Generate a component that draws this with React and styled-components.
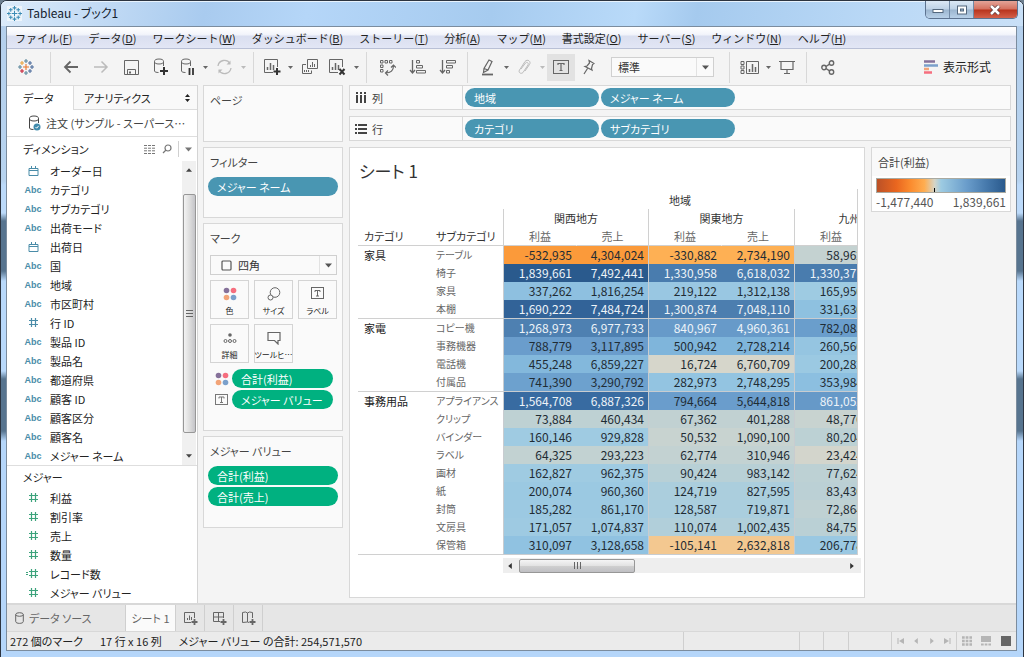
import { useState } from "react"
import styled, { createGlobalStyle } from "styled-components"

const GlobalStyle = createGlobalStyle`
    * {
        box-sizing: border-box;
    }

    body {
        margin: 0;
        background: #6d7f90;
        color: #333;
        font-family: "Noto Sans CJK JP", "Noto Sans", sans-serif;
        font-size: 11px;
        line-height: 18px;
        font-feature-settings: "palt";
    }

    button, select {
        margin: 0;
        padding: 0;
        border: none;
        background: none;
        color: inherit;
        font: inherit;
        font-feature-settings: inherit;
    }

    ul {
        margin: 0;
        padding: 0;
        list-style: none;
    }

    svg {
        display: block;
        flex: none;
    }
`

const Frame = styled.div`
    display: flex;
    flex-direction: column;
    min-height: 100vh;
    padding: 0 6px 6px 5px;
    border: 1px solid #2c3440;
    border-radius: 7px 7px 0 0;
    background: linear-gradient(180deg, #b4cfec 0, #b7d3ef 180px, #bcdafa 184px, #bcdafa 212px, #57748f 220px, #57748f 270px, #b9d9fb 280px, #b9d9fb 370px, #57748f 378px, #57748f 430px, #b5d6fa 440px, #b5d6fa 100%);
`

const TitleBar = styled.header`
    display: flex;
    height: 25px;
    margin: 0 -6px 0 -5px;
    padding-left: 6px;
    border-radius: 6px 6px 0 0;
    background: linear-gradient(100deg, #dcebfa 0%, #c4dcf5 9%, #a9cbef 20%, #b5d6f8 30%, #a6cbef 48%, #b9daf9 62%, #a5caee 68%, #b9d8f6 85%, #c9e0f7 100%);
    box-shadow: inset 0 1px 0 #e8f3fd;
`

const AppName = styled.h1`
    flex: 1;
    margin: 0;
    padding: 3px 0 0 5px;
    color: #15222e;
    font-size: 12px;
    font-weight: 400;
    line-height: 18px;
`

const AppIcon = styled.span`
    width: 15px;
    height: 15px;
    margin-top: 5px;
    background: #eef5fb;
`

const WindowButtons = styled.div`
    display: flex;
    height: 18px;
    margin-right: 5px;
    border: 1px solid #5d7390;
    border-top: none;
    border-radius: 0 0 5px 5px;
    overflow: hidden;
`

const WindowButton = styled.button`
    display: flex;
    align-items: center;
    justify-content: center;
    width: ${(props) => props.$close ? "43px" : "24px"};
    border-right: 1px solid ${(props) => props.$close ? "transparent" : "#7189a5"};
    background: ${(props) => props.$close
        ? "linear-gradient(#e3a498 0%, #d4705e 48%, #b8331c 52%, #d4604a 100%)"
        : "linear-gradient(#dbe8f5 0%, #bdd1e6 48%, #9bb5cf 52%, #b8d0e8 100%)"};
`

const Shell = styled.div`
    display: flex;
    flex: 1;
    flex-direction: column;
    border: 1px solid #7b8c9e;
    background: #f4f4f4;
`

const MenuBar = styled.nav`
    display: flex;
    gap: 16px;
    height: 22px;
    padding: 0 8px;
    border-bottom: 1px solid #b9c0d6;
    background: linear-gradient(#fff 0%, #f3f5fb 35%, #dadff0 45%, #e2e6f5 100%);
    font-feature-settings: normal;
`

const MenuItem = styled.button`
    color: #222;
    line-height: 20px;
    white-space: nowrap;
`

const Toolbar = styled.div`
    display: flex;
    align-items: center;
    height: 36px;
    color: #666;
`

const Divider = styled.span`
    width: 1px;
    height: 31px;
    margin: 0 5px;
    background: #d8d8d8;
`

const ToolButton = styled.button`
    display: flex;
    align-items: center;
    justify-content: center;
    width: ${(props) => props.$width || 28}px;
    height: 27px;
    background: ${(props) => props.$active ? "#e2e2e2" : "none"};
    color: ${(props) => props.$faded ? "#bbb" : "#666"};
`

const ShowMe = styled.button`
    display: flex;
    align-items: center;
    gap: 5px;
    margin-left: auto;
    margin-right: 25px;
    color: #222;
    font-size: 12px;
`

const SelectBox = styled.label`
    display: flex;
    align-items: center;
    flex: ${(props) => props.$wide ? "1" : "none"};
    width: ${(props) => props.$wide ? "auto" : "103px"};
    height: 20px;
    margin: ${(props) => props.$wide ? "0" : "0 10px"};
    padding-left: ${(props) => props.$wide ? "10px" : "6px"};
    border: 1px solid #d0d0d0;
    background: #fafafa;
    color: #555;

    select {
        flex: 1;
        min-width: 0;
        padding-left: ${(props) => props.$wide ? "6px" : "0"};
        appearance: none;
        color: #333;
        line-height: 18px;
    }
`

const SelectArrow = styled.span`
    display: flex;
    align-items: center;
    justify-content: center;
    width: 17px;
    height: 18px;
    border-left: 1px solid #e2e2e2;
`

const Workspace = styled.main`
    display: flex;
    flex: 1;
`

const DataPane = styled.aside`
    display: flex;
    flex-direction: column;
    width: 191px;
    flex: none;
    border-right: 1px solid #d4d4d4;
    background: #fff;
    color: #222;
`

const PaneTabs = styled.div`
    display: flex;
    height: 25px;
`

const PaneTab = styled.button`
    display: flex;
    align-items: center;
    justify-content: space-between;
    width: ${(props) => props.$grow ? "auto" : "66px"};
    flex: ${(props) => props.$grow ? "1" : "none"};
    padding: 0 7px 0 ${(props) => props.$grow ? "10px" : "16px"};
    border: solid #dcdcdc;
    border-width: ${(props) => props.$active ? "1px 0 0 0" : "1px 0 1px 1px"};
    background: ${(props) => props.$active ? "#fff" : "#f9f9f9"};
`

const SourceRow = styled.button`
    display: flex;
    align-items: center;
    gap: 5px;
    height: 27px;
    padding: 0 2px 0 20px;
    border-bottom: 1px solid #dedede;
    color: #444;
    text-align: left;
    white-space: nowrap;
`

const PaneHeader = styled.div`
    display: flex;
    align-items: center;
    gap: 6px;
    height: ${(props) => props.$short ? "22px" : "24px"};
    padding: 0 5px 0 16px;
    color: #777;
`

const PaneTitle = styled.h2`
    flex: 1;
    margin: 0;
    color: #222;
    font-size: 11px;
    font-weight: 400;
`

const HeaderLine = styled.span`
    width: 1px;
    height: 16px;
    background: #d0d0d0;
`

const DimensionArea = styled.div`
    display: flex;
    border-bottom: 1px solid #dedede;
`

const FieldList = styled.ul`
    flex: 1;
    color: ${(props) => props.$measure ? "#3da37c" : "#4a8ca8"};
`

const FieldRow = styled.li`
    display: flex;
    align-items: center;
    height: 19px;
    padding-left: 16px;
`

const FieldIcon = styled.span`
    display: flex;
    align-items: center;
    justify-content: center;
    width: 20px;
    margin-right: 7px;
    font-family: "Liberation Sans", Arial, sans-serif;
    font-size: 9px;
    font-weight: 700;
`

const FieldName = styled.span`
    color: #222;
    white-space: nowrap;
`

const VScroll = styled.div`
    display: flex;
    flex-direction: column;
    align-items: center;
    width: 14px;
    margin-right: 1px;
    padding: 6px 0;
    background: #f0f0f0;
    color: #444;
`

const VThumb = styled.div`
    display: flex;
    flex-direction: column;
    align-items: center;
    justify-content: center;
    gap: 2px;
    width: 13px;
    height: 239px;
    margin: 21px 0 auto;
    border: 1px solid #979797;
    border-radius: 2px;
    background: linear-gradient(90deg, #f3f3f3 0%, #dedede 50%, #c4c4c8 100%);
`

const Grip = styled.i`
    width: ${(props) => props.$upright ? "1px" : "7px"};
    height: ${(props) => props.$upright ? "7px" : "1px"};
    background: #666;
`

const CardColumn = styled.section`
    display: flex;
    flex-direction: column;
    gap: 5px;
    width: 140px;
    flex: none;
    margin-left: 5px;
`

const Card = styled.div`
    min-height: ${(props) => props.$height}px;
    padding: 0 5px;
    border: 1px solid #d8d8d8;
    background: #fafafa;
`

const CardTitle = styled.h2`
    margin: 0;
    padding-left: 1px;
    color: #444;
    font-size: 11px;
    font-weight: 400;
    line-height: 29px;
`

const Pill = styled.button`
    display: block;
    width: ${(props) => props.$width || "100%"};
    height: 19px;
    padding-left: 9px;
    border-radius: 10px;
    background: ${(props) => props.$green ? "#00b180" : "#4996b2"};
    color: #fff;
    line-height: 18px;
    text-align: left;
`

const PillStack = styled.div`
    display: grid;
    gap: 2px;
    margin: 0 -1px;
`

const MarkBody = styled.div`
    display: grid;
    gap: 5px;
    padding: 2px 0 0 1px;
`

const MarkGrid = styled.div`
    display: grid;
    grid-template-columns: repeat(3, 39px);
    gap: 5px;
`

const MarkButton = styled.button`
    display: flex;
    flex-direction: column;
    align-items: center;
    justify-content: space-between;
    height: 39px;
    padding-top: 6px;
    border: 1px solid #d4d4d4;
    color: #666;

    span {
        color: #222;
        font-size: 8px;
        line-height: 14px;
        white-space: nowrap;
    }
`

const MarkPills = styled.div`
    display: grid;
    grid-template-columns: 14px 101px;
    gap: 2px 3px;
    align-items: center;
    padding: 1px 0 0 5px;
    color: #777;
`

const Content = styled.section`
    display: flex;
    flex: 1;
    flex-direction: column;
    gap: 6px;
    min-width: 0;
    padding: 0 5px 5px 6px;
`

const Shelf = styled.div`
    display: flex;
    align-items: center;
    gap: 2px;
    height: 25px;
    border: 1px solid #d8d8d8;
    background: #fafafa;
`

const ShelfLabel = styled.div`
    display: flex;
    align-items: center;
    gap: 5px;
    width: 113px;
    height: 23px;
    padding-left: 5px;
    border-right: 1px solid #d8d8d8;
    color: #444;
`

const ViewRow = styled.div`
    display: flex;
    flex: 1;
    align-items: flex-start;
    gap: 6px;
`

const Sheet = styled.article`
    flex: 1;
    align-self: stretch;
    min-width: 0;
    padding: 11px 6px 24px 8px;
    border: 1px solid #d8d8d8;
    background: #fff;
`

const SheetTitle = styled.h2`
    margin: 0 0 6px;
    padding-left: 1px;
    color: #333;
    font-size: 17px;
    font-weight: 400;
    line-height: 24px;
`

const TableClip = styled.div`
    overflow: hidden;
    border-right: 1px solid #d0d0d0;
`

const CrossTab = styled.table`
    width: 568px;
    border-spacing: 0;
    table-layout: fixed;
    color: #333;

    th {
        padding: 0;
        font-weight: 400;
        text-align: left;
        vertical-align: top;
        white-space: nowrap;
    }
`

const Col = styled.col`
    width: ${(props) => props.$width}px;
`

const TopHead = styled.th`
    height: 20px;

    && {
        padding: 2px 69px 0 0;
        text-align: center;
    }
`

const RegionHead = styled.th`
    height: 18px;
    border-left: 1px solid #d0d0d0;

    && {
        text-align: center;
    }
`

const ColumnHead = styled.th`
    height: 19px;
    border-bottom: 1px solid #d0d0d0;
    border-left: 1px solid ${(props) => props.$first ? "#d0d0d0" : "transparent"};
    color: #666;

    && {
        text-align: center;
    }
`

const LabelHead = styled.th`
    height: 19px;
    border-bottom: 1px solid #d0d0d0;

    && {
        padding-left: 6px;
    }
`

const RowLabel = styled.th`
    height: ${(props) => props.$last ? "19px" : "18px"};
    border-bottom: ${(props) => props.$last ? "1px solid #d0d0d0" : "none"};
    color: ${(props) => props.$group ? "#222" : "#666"};
    font-size: ${(props) => props.$group ? "11px" : "10px"};

    && {
        padding-left: 6px;
    }
`

const Value = styled.td`
    height: ${(props) => props.$last ? "19px" : "18px"};
    padding: 0 4px 0 0;
    border-bottom: ${(props) => props.$last ? "1px solid #c8ccd0" : "none"};
    border-left: ${(props) => props.$first ? "1px solid #c8ccd0" : "none"};
    background: ${(props) => props.$color};
    color: ${(props) => props.$light ? "#edf3f8" : "#1f2c34"};
    font-size: 12px;
    font-feature-settings: normal;
    text-align: right;
`

const HScroll = styled.div`
    display: flex;
    align-items: center;
    justify-content: space-between;
    height: 15px;
    margin: 3px -3px 0 145px;
    padding: 0 6px 0 4px;
    background: #eee;
    color: #333;
`

const HThumb = styled.div`
    display: flex;
    align-items: center;
    justify-content: center;
    gap: 2px;
    width: 116px;
    height: 14px;
    margin: 0 auto 0 6px;
    border: 1px solid #979797;
    border-radius: 2px;
    background: linear-gradient(#f5f5f5 0%, #e2e2e2 48%, #cfcfcf 52%, #bfbfc3 100%);
`

const Legend = styled.aside`
    width: 140px;
    flex: none;
    border: 1px solid #d8d8d8;
    background: #fff;
`

const LegendTitle = styled.h2`
    margin: 0;
    padding-left: 6px;
    background: #f9f9f9;
    color: #444;
    font-size: 11px;
    font-weight: 400;
    line-height: 28px;
`

const LegendBody = styled.div`
    display: grid;
    grid-template-columns: 1fr auto;
    padding: 2px 4px 0;
    color: #555;
    font-size: 12px;
    font-feature-settings: normal;
`

const Ramp = styled.div`
    display: flex;
    grid-column: 1 / 3;
    align-items: flex-end;
    height: 15px;
    padding-left: 57px;
    border: 1px solid #a9a9a0;
    background: linear-gradient(90deg, #bb5127 0%, #e9661f 15%, #fb8b2e 26%, #ffad50 37%, #d5d4c6 45%, #9dcbe2 50%, #6a9dcb 70%, #4578ab 86%, #2a5a8d 100%);
`

const ZeroTick = styled.i`
    width: 1px;
    height: 4px;
    background: #000;
`

const SheetTabs = styled.nav`
    display: flex;
    height: 28px;
    border-top: 2px solid #d8d8d8;
    background: #e6e6e6;
    color: #666;
`

const SheetTab = styled.button`
    display: flex;
    align-items: center;
    justify-content: ${(props) => props.$source ? "flex-start" : "center"};
    gap: 5px;
    width: ${(props) => props.$width}px;
    padding-left: ${(props) => props.$source ? "8px" : "0"};
    border-right: 1px solid #cfcfcf;
    background: ${(props) => props.$active ? "#fafafa" : "none"};
`

const StatusBar = styled.footer`
    display: flex;
    height: 19px;
    border-top: 1px solid #d8d8d8;
    background: #ebebeb;
    color: #222;
`

const StatusText = styled.div`
    display: flex;
    flex: 1;
    gap: 17px;
    padding-left: 3px;
`

const StatusCell = styled.div`
    display: flex;
    align-items: center;
    justify-content: space-around;
    width: ${(props) => props.$width}px;
    border-left: 1px solid #cfcfcf;
    color: #b5b5b5;
`

/* icons */

const Caret = ({ size = 5, dir = "down" }) => {
    const turn = { down: 0, left: 90, up: 180, right: 270 }[dir]
    return (
        <svg width={size} height={size} viewBox="0 0 10 10" fill="currentColor">
            <path d="M0 2h10L5 8z" transform={`rotate(${turn} 5 5)`}/>
        </svg>
    )
}

const Icon = ({ w = 18, h = 18, children, ...rest }) => (
    <svg width={w} height={h} viewBox={`0 0 ${w} ${h}`} fill="none" stroke="currentColor" {...rest}>
        {children}
    </svg>
)

const Logo = ({ size, colors }) => {
    const marks = [
        [8, 8, 3, colors[0]], [8, 2, 2, colors[1]], [8, 14, 2, colors[1]], [2, 8, 2, colors[1]], [14, 8, 2, colors[3]],
        [4, 4, 2, colors[2]], [12, 4, 2, colors[3]], [4, 12, 2, colors[4]], [12, 12, 2, colors[3]],
    ]
    return (
        <svg width={size} height={size} viewBox="0 0 16 16" fill="none">
            {marks.map(([x, y, r, color], index) => (
                <path key={index} d={`M${x - r} ${y}h${r * 2}M${x} ${y - r}v${r * 2}`} stroke={color} strokeWidth="1.1"/>
            ))}
        </svg>
    )
}

const BarsPath = () => <path d="M4.5 12V9M7.5 12V5M10.5 12V7" strokeWidth="1.5"/>

const Cylinder = () => (
    <>
        <ellipse cx="7" cy="3.5" rx="4.5" ry="2.5"/>
        <path d="M2.5 3.5V13c0 1 2 1.500 4 1.500M11.500 3.500V8"/>
    </>
)

const TextIcon = ({ w = 16, h = 14 }) => (
    <Icon w={w} h={h}>
        <rect x="0.5" y="0.5" width={w - 1} height={h - 1}/>
        <path d={`M${w / 2 - 2.5} ${h / 2 - 1}v-1.5h5v1.500M${w / 2} ${h / 2 - 2.5}v5.500M${w / 2 - 1.5} ${h / 2 + 3}h3`}/>
    </Icon>
)

const ColorDots = () => (
    <Icon w={14} h={14} stroke="none">
        <circle cx="3.5" cy="3.5" r="2.8" fill="#86719a"/>
        <circle cx="10.5" cy="3.5" r="2.8" fill="#f66e7e"/>
        <circle cx="3.5" cy="10.5" r="2.8" fill="#f2a478"/>
        <circle cx="10.5" cy="10.5" r="2.8" fill="#7ba0cb"/>
    </Icon>
)

const HashIcon = ({ calc }) => (
    <Icon w={14} h={11} strokeWidth="1.2">
        <path d="M5.5 1v9M9.5 1v9M3 3.5h9M3 7.500h9"/>
        {calc && <path d="M0 4.5h2M0 6.5h2"/>}
    </Icon>
)

const CalendarIcon = () => (
    <Icon w={11} h={10}>
        <path d="M1 2.5h9v7H1zM1 4.5h9M3.5 0v3M7.5 0v3"/>
    </Icon>
)

const fieldIcons = {
    abc: "Abc",
    date: <CalendarIcon/>,
    num: <HashIcon/>,
    calc: <HashIcon calc/>,
}

/* data */

const menus = [
    ["ファイル", "F"], ["データ", "D"], ["ワークシート", "W"], ["ダッシュボード", "B"], ["ストーリー", "T"], ["分析", "A"],
    ["マップ", "M"], ["書式設定", "O"], ["サーバー", "S"], ["ウィンドウ", "N"], ["ヘルプ", "H"],
]

const dimensions = [
    ["date", "オーダー日"], ["abc", "カテゴリ"], ["abc", "サブカテゴリ"], ["abc", "出荷モード"], ["date", "出荷日"], ["abc", "国"],
    ["abc", "地域"], ["abc", "市区町村"], ["num", "行 ID"], ["abc", "製品 ID"], ["abc", "製品名"], ["abc", "都道府県"],
    ["abc", "顧客 ID"], ["abc", "顧客区分"], ["abc", "顧客名"], ["abc", "メジャー ネーム"],
]

const measures = [
    ["num", "利益"], ["num", "割引率"], ["num", "売上"], ["num", "数量"], ["calc", "レコード数"], ["num", "メジャー バリュー"],
]

// profit / sales pairs for each region
const groups = [
    { name: "家具", rows: [
        ["テーブル", -532935, 4304024, -330882, 2734190, 58962],
        ["椅子", 1839661, 7492441, 1330958, 6618032, 1330371],
        ["家具", 337262, 1816254, 219122, 1312138, 165950],
        ["本棚", 1690222, 7484724, 1300874, 7048110, 331630],
    ] },
    { name: "家電", rows: [
        ["コピー機", 1268973, 6977733, 840967, 4960361, 782085],
        ["事務機器", 788779, 3117895, 500942, 2728214, 260560],
        ["電話機", 455248, 6859227, 16724, 6760709, 200282],
        ["付属品", 741390, 3290792, 282973, 2748295, 353984],
    ] },
    { name: "事務用品", rows: [
        ["アプライアンス", 1564708, 6887326, 794664, 5644818, 861052],
        ["クリップ", 73884, 460434, 67362, 401288, 48770],
        ["バインダー", 160146, 929828, 50532, 1090100, 80204],
        ["ラベル", 64325, 293223, 62774, 310946, 23424],
        ["画材", 162827, 962375, 90424, 983142, 77624],
        ["紙", 200074, 960360, 124719, 827595, 83430],
        ["封筒", 185282, 861170, 128587, 719871, 72864],
        ["文房具", 171057, 1074837, 110074, 1002435, 84755],
        ["保管箱", 310097, 3128658, -105141, 2632818, 206778],
    ] },
]

const stops = [
    [-532935, 251, 154, 58], [-330882, 254, 176, 84], [-105141, 243, 200, 144], [16724, 214, 214, 203], [58962, 196, 210, 209],
    [90424, 184, 208, 214], [124719, 171, 206, 221], [160146, 159, 203, 226], [310097, 144, 194, 225], [500942, 127, 181, 219],
    [788779, 106, 157, 204], [1268973, 78, 128, 177], [1564708, 56, 107, 161], [1839661, 42, 90, 141],
]

const profitColor = (value) => {
    const next = Math.max(1, stops.findIndex((stop) => value <= stop[0]))
    const [from, to] = [stops[next - 1], stops[next]]
    const t = (value - from[0]) / (to[0] - from[0])
    return `rgb(${[1, 2, 3].map((i) => Math.round(from[i] + (to[i] - from[i]) * t)).join(",")})`
}

const Fields = ({ items, measure }) => (
    <FieldList $measure={measure}>
        {items.map(([type, name]) => (
            <FieldRow key={name}>
                <FieldIcon>{fieldIcons[type]}</FieldIcon>
                <FieldName>{name}</FieldName>
            </FieldRow>
        ))}
    </FieldList>
)

const MainToolbar = () => {
    const [fit, setFit] = useState("標準")

    return (
        <Toolbar>
            <ToolButton $width={38} aria-label="スタート"><Logo size={16} colors={["#e8762c", "#5b879b", "#e8a33d", "#4a6a9b", "#c72037"]}/></ToolButton>
            <Divider/>
            <ToolButton $width={30} aria-label="元に戻す"><Icon w={16} h={14} strokeWidth="1.8"><path d="M15 7H2M7.5 1.5L2 7l5.5 5.5"/></Icon></ToolButton>
            <ToolButton $width={30} $faded aria-label="やり直し"><Icon w={16} h={14} strokeWidth="1.5"><path d="M1 7h13M8.5 1.5L14 7l-5.500 5.5"/></Icon></ToolButton>
            <ToolButton $width={30} aria-label="保存"><Icon w={15} h={15}><path d="M0.5 0.5h14v14h-14zM3.5 14V9.5h8V14"/><path d="M5 12.5h2" strokeWidth="2"/></Icon></ToolButton>
            <ToolButton $width={30} aria-label="新しいデータ ソース"><Icon><Cylinder/><path d="M12 9v8M8 13h8" stroke="#333" strokeWidth="2"/></Icon></ToolButton>
            <ToolButton $width={24} aria-label="自動更新の一時停止"><Icon><Cylinder/><path d="M10.5 10v7M14 10v7" stroke="#333" strokeWidth="1.8"/></Icon></ToolButton>
            <ToolButton $width={10} aria-label="更新オプション"><Caret/></ToolButton>
            <ToolButton $width={28} $faded aria-label="更新"><Icon w={17} h={16}><path d="M2 7a6.500 6.500 0 0 1 12-2.500M15 9a6.500 6.500 0 0 1-12 2.500" strokeWidth="1.3"/><path d="M14.5 1.5v4h-4zM2.5 14.5v-4h4z" fill="currentColor" stroke="none"/></Icon></ToolButton>
            <ToolButton $width={10} $faded aria-label="更新の種類"><Caret/></ToolButton>
            <Divider/>
            <ToolButton $width={26} aria-label="新しいワークシート"><Icon><path d="M10 14.5H1.5v-13h13V9"/><BarsPath/><path d="M14 10v7M10.5 13.5h7" stroke="#333" strokeWidth="2"/></Icon></ToolButton>
            <ToolButton $width={10} aria-label="新規作成の種類"><Caret/></ToolButton>
            <ToolButton aria-label="複製"><Icon w={17} h={16}><path d="M6.5 0.5h10v9h-10zM5 5.500H1.500v9h9V11.500M9.500 8V6M11.500 8V3M13.500 8V5M3.500 13v-2M5.500 13v-2M7.500 13v-2"/></Icon></ToolButton>
            <ToolButton aria-label="シートのクリア"><Icon><path d="M10 14.5H1.5v-13h13V9"/><BarsPath/><path d="M11.5 11l5 5.5M16.5 11l-5 5.5" stroke="#333" strokeWidth="2"/></Icon></ToolButton>
            <ToolButton $width={10} aria-label="クリアの種類"><Caret/></ToolButton>
            <Divider/>
            <ToolButton $width={30} aria-label="行と列の交換"><Icon w={17} h={17}><path d="M1.500 1.500h2.500v2.500H1.500zM6 1.500h2.500v2.500H6zM10.500 1.500H13v2.500h-2.500zM1.500 6H4v2.500H1.500zM1.500 10.500H4V13H1.500z"/><path d="M14.500 6.500c0 5-2.500 7.500-8 7.500M12 8.500l2.500-2.500L17 8.500M9 11.500L6.500 14 9 16.500" strokeWidth="1.200"/></Icon></ToolButton>
            <ToolButton $width={30} aria-label="昇順"><Icon w={17} h={16}><path d="M3.5 1v12M1 11l2.500 3L6 11" strokeWidth="1.3"/><path d="M7.5 1.500h3v2.500h-3zM7.5 6.500h6V9h-6zM7.5 11.500h9V14h-9z"/></Icon></ToolButton>
            <ToolButton $width={30} aria-label="降順"><Icon w={17} h={16}><path d="M3.5 1v12M1 11l2.500 3L6 11" strokeWidth="1.3"/><path d="M7.5 1.500h9V4h-9zM7.5 6.500h6V9h-6zM7.5 11.500h3V14h-3z"/></Icon></ToolButton>
            <Divider/>
            <ToolButton $width={28} aria-label="ハイライト"><Icon w={15} h={17}><path d="M9 1l3 1.500-4 8.500-4.500 2.500L4 9.500zM4 9.500L8 11" strokeWidth="1.200"/><path d="M2 15.500h11" strokeWidth="1.8"/></Icon></ToolButton>
            <ToolButton $width={10} aria-label="ハイライトの種類"><Caret/></ToolButton>
            <ToolButton $width={26} $faded aria-label="グループ"><Icon w={14} h={16}><path d="M4 10l4.500-6c1.500-1.500 3.500 0 2.500 2L6 13.500c-2 2-5 0-3.500-2.500L8 2.500c2.500-3 6.500 0 4.500 3L8 12"/></Icon></ToolButton>
            <ToolButton $width={10} $faded aria-label="グループの種類"><Caret/></ToolButton>
            <ToolButton $active aria-label="マーク ラベルを表示"><Icon w={16} h={14}><rect x="0.5" y="0.5" width="15" height="13"/><path d="M5 5V3.500h6V5M8 3.500v7M6.500 10.500h3" strokeWidth="1.2"/></Icon></ToolButton>
            <ToolButton $width={26} aria-label="軸の固定"><Icon w={13} h={16}><path d="M7 1.500l5 3-1.500 1-1 4 .500 1.500-7-3.500 2-.500 2.500-3zM5.500 9.500L2 15" strokeWidth="1.200"/></Icon></ToolButton>
            <SelectBox>
                <select aria-label="表示サイズ" value={fit} onChange={(e) => setFit(e.target.value)}>
                    <option>標準</option>
                    <option>幅を合わせる</option>
                    <option>ビュー全体</option>
                </select>
                <SelectArrow><Caret size={7}/></SelectArrow>
            </SelectBox>
            <Divider/>
            <ToolButton $width={28} aria-label="カードの表示"><Icon w={19} h={15}><path d="M1 1.500h3v3H1zM1 6h3v3H1zM1 10.500h3v3H1zM6.500 1.500h12v12h-12z"/><path d="M9.500 12V9M12.500 12V4M15.500 12V7" strokeWidth="1.5"/></Icon></ToolButton>
            <ToolButton $width={10} aria-label="カードの種類"><Caret/></ToolButton>
            <ToolButton aria-label="プレゼンテーション モード"><Icon w={16} h={15}><path d="M0 1.500h16M2 1.500v8h12v-8M8 9.500v4M5 13.500h6" strokeWidth="1.2"/></Icon></ToolButton>
            <Divider/>
            <ToolButton $width={32} aria-label="共有"><Icon w={14} h={15} strokeWidth="1.4"><circle cx="3" cy="7.5" r="2.2"/><circle cx="10.5" cy="3" r="2.2"/><circle cx="10.5" cy="12" r="2.2"/><path d="M5 6.500l3.500-2.300M5 8.500l3.500 2.300"/></Icon></ToolButton>
            <ShowMe>
                <Icon w={14} h={14} strokeWidth="2.5">
                    <path d="M0 1.500h11" stroke="#86719a"/>
                    <path d="M0 5.500h14" stroke="#7ba0cb"/>
                    <path d="M0 9h5" stroke="#f2a478"/>
                    <path d="M0 12.500h8" stroke="#f66e7e"/>
                </Icon>
                表示形式
            </ShowMe>
        </Toolbar>
    )
}

const SidePane = () => (
    <DataPane>
        <PaneTabs>
            <PaneTab $active>データ</PaneTab>
            <PaneTab $grow>
                アナリティクス
                <Icon w={5} h={8} fill="currentColor" stroke="none"><path d="M0 3h5L2.500 0zM0 5h5L2.500 8z"/></Icon>
            </PaneTab>
        </PaneTabs>
        <SourceRow>
            <Icon w={14} h={17}><Cylinder/><circle cx="10" cy="12" r="3.500" fill="#3f8aab" stroke="none"/><path d="M8.500 12l1.200 1.200 2-2.400" stroke="#fff"/></Icon>
            注文 (サンプル - スーパース…
        </SourceRow>
        <PaneHeader>
            <PaneTitle>ディメンション</PaneTitle>
            <Icon w={12} h={9}><path d="M0 .500h12M0 3.200h12M0 5.800h12M0 8.500h12" strokeDasharray="3 1"/></Icon>
            <Icon w={10} h={10} strokeWidth="1.2"><circle cx="6" cy="4" r="3"/><path d="M4 6L1 9"/></Icon>
            <HeaderLine/>
            <Caret size={7}/>
        </PaneHeader>
        <DimensionArea>
            <Fields items={dimensions}/>
            <VScroll>
                <Caret size={6} dir="up"/>
                <VThumb><Grip/><Grip/><Grip/></VThumb>
                <Caret size={6}/>
            </VScroll>
        </DimensionArea>
        <PaneHeader $short><PaneTitle>メジャー</PaneTitle></PaneHeader>
        <Fields items={measures} measure/>
    </DataPane>
)

const MarksCard = () => {
    const [mark, setMark] = useState("四角")

    return (
        <Card $height={208}>
            <CardTitle>マーク</CardTitle>
            <MarkBody>
                <SelectBox $wide>
                    <Icon w={11} h={11}><rect x="1" y="1" width="9" height="9" rx="1" strokeWidth="1.2"/></Icon>
                    <select aria-label="マークの種類" value={mark} onChange={(e) => setMark(e.target.value)}>
                        <option>四角</option>
                        <option>棒</option>
                        <option>線</option>
                    </select>
                    <SelectArrow><Caret size={7}/></SelectArrow>
                </SelectBox>
                <MarkGrid>
                    <MarkButton><ColorDots/><span>色</span></MarkButton>
                    <MarkButton><Icon w={14} h={14}><circle cx="8" cy="5.5" r="4.8"/><circle cx="3.5" cy="10.5" r="2.5" fill="#fafafa"/></Icon><span>サイズ</span></MarkButton>
                    <MarkButton><TextIcon w={13} h={12}/><span>ラベル</span></MarkButton>
                    <MarkButton><Icon w={14} h={14}><circle cx="7" cy="4" r="1.8" fill="currentColor" stroke="none"/><circle cx="2.5" cy="10" r="1.5"/><circle cx="7" cy="10" r="1.5"/><circle cx="11.5" cy="10" r="1.5"/></Icon><span>詳細</span></MarkButton>
                    <MarkButton><Icon w={14} h={14} strokeWidth="1.2"><path d="M1 1.500h12v8h-2V13L7.500 9.500H1z"/></Icon><span>ツールヒ…</span></MarkButton>
                </MarkGrid>
                <MarkPills>
                    <ColorDots/>
                    <Pill $green>合計(利益)</Pill>
                    <TextIcon w={13} h={11}/>
                    <Pill $green>メジャー バリュー</Pill>
                </MarkPills>
            </MarkBody>
        </Card>
    )
}

const ProfitTable = () => (
    <TableClip>
        <CrossTab>
            <colgroup>
                {[72, 73, 73, 72, 73, 73, 73, 59].map((width, index) => <Col key={index} $width={width}/>)}
            </colgroup>
            <thead>
                <tr>
                    <th colSpan={2}/>
                    <TopHead colSpan={6}>地域</TopHead>
                </tr>
                <tr>
                    <th colSpan={2}/>
                    {["関西地方", "関東地方", "九州地方"].map((region) => <RegionHead key={region} colSpan={2}>{region}</RegionHead>)}
                </tr>
                <tr>
                    <LabelHead>カテゴリ</LabelHead>
                    <LabelHead>サブカテゴリ</LabelHead>
                    {["利益", "売上", "利益", "売上", "利益"].map((name, index) => (
                        <ColumnHead key={index} $first={index % 2 === 0}>{name}</ColumnHead>
                    ))}
                </tr>
            </thead>
            <tbody>
                {groups.map((group) => group.rows.map(([name, ...values], rowIndex) => {
                    const last = rowIndex === group.rows.length - 1
                    return (
                        <tr key={group.name + name}>
                            {rowIndex === 0 && <RowLabel $group $last rowSpan={group.rows.length}>{group.name}</RowLabel>}
                            <RowLabel $last={last}>{name}</RowLabel>
                            {values.map((value, index) => {
                                const profit = values[index - (index % 2)]
                                return (
                                    <Value
                                        key={index}
                                        $first={index % 2 === 0}
                                        $last={last}
                                        $color={profitColor(profit)}
                                        $light={profit > 800000}
                                    >
                                        {value.toLocaleString("en-US")}
                                    </Value>
                                )
                            })}
                        </tr>
                    )
                }))}
            </tbody>
        </CrossTab>
    </TableClip>
)

const App = () => {
    return (
        <>
            <GlobalStyle/>
            <Frame>
                <TitleBar>
                    <AppIcon><Logo size={15} colors={["#3c8cb5", "#3c8cb5", "#3c8cb5", "#3c8cb5", "#3c8cb5"]}/></AppIcon>
                    <AppName>Tableau - ブック1</AppName>
                    <WindowButtons>
                        <WindowButton aria-label="最小化"><Icon w={12} h={8}><rect x="1" y="3.5" width="10" height="3" fill="#fff" stroke="#54687e"/></Icon></WindowButton>
                        <WindowButton aria-label="最大化"><Icon w={12} h={10}><rect x="1.5" y="1" width="9" height="8" fill="#fff" stroke="#54687e"/><rect x="4.5" y="4" width="3" height="2" fill="#9bb5cf" stroke="#54687e"/></Icon></WindowButton>
                        <WindowButton $close aria-label="閉じる"><Icon w={12} h={10}><path d="M2 1l8 8M10 1L2 9" stroke="#5b3a3a" strokeWidth="4"/><path d="M2 1l8 8M10 1L2 9" stroke="#fff" strokeWidth="2.5"/></Icon></WindowButton>
                    </WindowButtons>
                </TitleBar>
                <Shell>
                    <MenuBar>
                        {menus.map(([label, key]) => <MenuItem key={key}>{label}(<u>{key}</u>)</MenuItem>)}
                    </MenuBar>
                    <MainToolbar/>
                    <Workspace>
                        <SidePane/>
                        <CardColumn>
                            <Card $height={57}><CardTitle>ページ</CardTitle></Card>
                            <Card $height={71}>
                                <CardTitle>フィルター</CardTitle>
                                <PillStack><Pill>メジャー ネーム</Pill></PillStack>
                            </Card>
                            <MarksCard/>
                            <Card $height={92}>
                                <CardTitle>メジャー バリュー</CardTitle>
                                <PillStack>
                                    <Pill $green>合計(利益)</Pill>
                                    <Pill $green>合計(売上)</Pill>
                                </PillStack>
                            </Card>
                        </CardColumn>
                        <Content>
                            <Shelf>
                                <ShelfLabel>
                                    <Icon w={12} h={12} strokeWidth="2"><path d="M2 0v2M6 0v2M10 0v2M2 3v8M6 3v8M10 3v8"/></Icon>
                                    列
                                </ShelfLabel>
                                <Pill $width="134px">地域</Pill>
                                <Pill $width="134px">メジャー ネーム</Pill>
                            </Shelf>
                            <Shelf>
                                <ShelfLabel>
                                    <Icon w={12} h={12} strokeWidth="2"><path d="M0 2h2M0 6h2M0 10h2M3 2h9M3 6h9M3 10h9"/></Icon>
                                    行
                                </ShelfLabel>
                                <Pill $width="134px">カテゴリ</Pill>
                                <Pill $width="134px">サブカテゴリ</Pill>
                            </Shelf>
                            <ViewRow>
                                <Sheet>
                                    <SheetTitle>シート 1</SheetTitle>
                                    <ProfitTable/>
                                    <HScroll>
                                        <Caret size={6} dir="left"/>
                                        <HThumb><Grip $upright/><Grip $upright/><Grip $upright/></HThumb>
                                        <Caret size={6} dir="right"/>
                                    </HScroll>
                                </Sheet>
                                <Legend>
                                    <LegendTitle>合計(利益)</LegendTitle>
                                    <LegendBody>
                                        <Ramp><ZeroTick/></Ramp>
                                        <span>-1,477,440</span>
                                        <span>1,839,661</span>
                                    </LegendBody>
                                </Legend>
                            </ViewRow>
                        </Content>
                    </Workspace>
                    <SheetTabs>
                        <SheetTab $source $width={119}>
                            <Icon w={9} h={12}><ellipse cx="4.5" cy="2.5" rx="3.8" ry="1.8"/><path d="M.700 2.500v7c0 2.500 7.600 2.500 7.600 0v-7"/></Icon>
                            データ ソース
                        </SheetTab>
                        <SheetTab $active $width={50}>シート 1</SheetTab>
                        <SheetTab $width={29} aria-label="新しいワークシート"><Icon w={15} h={14}><path d="M8 11.500H1.500v-10h10V7M4.500 9V7M6.500 9V4.500M8.500 9V6"/><path d="M11.500 8v6M8.500 11h6" strokeWidth="1.8"/></Icon></SheetTab>
                        <SheetTab $width={29} aria-label="新しいダッシュボード"><Icon w={15} h={14}><path d="M8 10.500H1.500v-9h10V7M1.500 6h10M6.500 1.500v9"/><path d="M11.500 8v6M8.500 11h6" strokeWidth="1.8"/></Icon></SheetTab>
                        <SheetTab $width={29} aria-label="新しいストーリー"><Icon w={15} h={14}><path d="M8 11.500l-1.500-.500-5 .500v-10L4.500 1l2 1 2-1 3 .500V7M6.500 2v9"/><path d="M11.500 8v6M8.500 11h6" strokeWidth="1.8"/></Icon></SheetTab>
                    </SheetTabs>
                    <StatusBar>
                        <StatusText>
                            <span>272 個のマーク</span>
                            <span>17 行 x 16 列</span>
                            <span>メジャー バリュー の合計: 254,571,570</span>
                        </StatusText>
                        <StatusCell $width={116}/>
                        <StatusCell $width={24}/>
                        <StatusCell $width={25}/>
                        <StatusCell $width={43}/>
                        <StatusCell $width={65}>
                            <Icon w={7} h={6}><path d="M1 0v6"/><path d="M7 0v6L2 3z" fill="currentColor" stroke="none"/></Icon>
                            <Caret size={6} dir="left"/>
                            <Caret size={6} dir="right"/>
                            <Icon w={7} h={6}><path d="M6 0v6"/><path d="M0 0v6l5-3z" fill="currentColor" stroke="none"/></Icon>
                        </StatusCell>
                        <StatusCell $width={60}>
                            <Icon w={10} h={10}><path d="M0 1.500h10M0 5h10M0 8.500h10" strokeWidth="2.5" strokeDasharray="2.7 1"/></Icon>
                            <Icon w={10} h={10}><path d="M0 0h10v6H0z" fill="currentColor" stroke="none"/><path d="M0 8.500h10" strokeWidth="2" strokeDasharray="2.7 1"/></Icon>
                            <Icon w={10} h={10} stroke="none"><path d="M0 0h10v10H0z" fill="#666"/></Icon>
                        </StatusCell>
                    </StatusBar>
                </Shell>
            </Frame>
        </>
    )
}

export default App
